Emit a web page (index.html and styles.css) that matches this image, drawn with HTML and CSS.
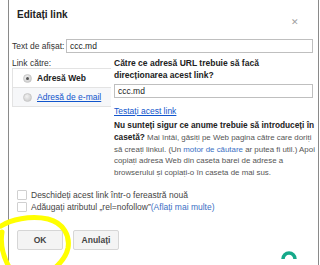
FILE: index.html
```html
<!DOCTYPE html>
<html lang="ro">
<head>
  <meta charset="UTF-8" />
  <title>Editați link</title>
  <link rel="stylesheet" href="styles.css">
</head>
<body>

  <div class="dialog">
    <div class="head">
      <h1>Editați link</h1>
      <span class="close">&#x2715;</span>
    </div>

    <div class="text-row">
      <label>Text de afișat:</label>
      <div class="field">ccc.md</div>
    </div>

    <div class="body">
      <div class="left">
        <div class="cap">Link către:</div>
        <div class="tabs">
          <div class="tab active"><span class="radio on"></span>Adresă Web</div>
          <div class="tab"><span class="radio"></span><a href="#">Adresă de e-mail</a></div>
        </div>
      </div>

      <div class="right">
        <p class="question">Către ce adresă URL trebuie să facă<br>direcționarea acest link?</p>
        <div class="field wide">ccc.md</div>
        <a class="test" href="#">Testați acest link</a>
        <p class="help"><b>Nu sunteți sigur ce anume trebuie să introduceți în<br>casetă?</b> Mai întâi, găsiți pe Web pagina către care doriți<br>să creați linkul. (Un <span class="blue">motor de căutare</span> ar putea fi util.) Apoi<br>copiați adresa Web din caseta barei de adrese a<br>browserului și copiați-o în caseta de mai sus.</p>
      </div>
    </div>

    <div class="checks">
      <div class="check"><span class="box"></span>Deschideți acest link într-o fereastră nouă</div>
      <div class="check"><span class="box"></span>Adăugați atributul „rel=nofollow” <span class="blue">(Aflați mai multe)</span></div>
    </div>

    <div class="buttons">
      <button class="btn">OK</button>
      <button class="btn">Anulați</button>
    </div>
  </div>

  <!-- yellow marker circle drawn over the OK button -->
  <svg class="marker" width="80" height="50" viewBox="0 215 80 50">
    <path d="M1 226 C10 220 30 215 48 219 C64 223 70 236 68 248 C66 258 60 263 56 267" />
    <path d="M2 232 C0 244 3 256 9 267" />
  </svg>

  <svg class="fab" width="18" height="12" viewBox="0 0 18 12">
    <path d="M3 10 A6 6 0 0 1 15 10" />
  </svg>

</body>
</html>
```

FILE: styles.css
```css
body {
  margin: 0;
  background-color: #fff;
  font-family: "Liberation Sans", Arial, sans-serif;
  font-size: 8.5px;
  color: #333;
}

.dialog {
  margin-left: 8px;
  width: 309px;
  height: 265px;
  border-left: 1px solid #8a8a8a;
  border-right: 1px solid #8a8a8a;
}

.head {
  height: 39px;
  display: flex;
  justify-content: space-between;
}

.head h1 {
  margin: 9px 0 0 8px;
  font-size: 10px;
  line-height: 12px;
  font-weight: bold;
  color: #222;
}

.close {
  margin: 17px 19px 0 0;
  font-size: 9px;
  line-height: 10px;
  color: #a0a0a0;
}

.text-row {
  display: flex;
  align-items: center;
  padding-left: 3px;
}

.text-row label {
  width: 54px;
  color: #333;
}

.field {
  height: 12px;
  line-height: 12px;
  width: 242px;
  padding-left: 3px;
  border: 1px solid #bfbfbf;
  color: #222;
}

.body {
  display: flex;
  margin-top: 4px;
  padding-left: 3px;
}

.left {
  width: 102px;
}

.cap {
  line-height: 12px;
}

.tabs {
  width: 98px;
  margin-top: -1px;
  border: 1px solid #e3e3e3;
  border-right: none;
  background-color: #f6f7f9;
}

.tab {
  height: 18px;
  display: flex;
  align-items: center;
  padding-left: 10px;
}

.tab + .tab {
  border-top: 1px solid #e3e3e3;
}

.tab.active {
  background-color: #fff;
  font-weight: bold;
  color: #222;
}

.radio {
  width: 7px;
  height: 7px;
  border-radius: 50%;
  background: radial-gradient(circle at 40% 35%, #f2f2f2, #c4c4c4);
  border: 1px solid #c8c8c8;
  margin-right: 5px;
  position: relative;
}

.radio.on::after {
  content: "";
  position: absolute;
  left: 2px;
  top: 2px;
  width: 3px;
  height: 3px;
  border-radius: 50%;
  background-color: #555;
}

a {
  color: #1155cc;
}

.blue {
  color: #3a6fc4;
}

.right {
  width: 199px;
  white-space: nowrap;
}

.question {
  margin: 0;
  line-height: 12px;
  font-weight: bold;
  color: #222;
}

.field.wide {
  margin-top: 3px;
  width: 194px;
}

.test {
  display: block;
  margin-top: 7px;
  line-height: 12px;
}

.help {
  margin: 3px 0 0;
  line-height: 11.8px;
  font-size: 7.9px;
  color: #555;
}

.help b {
  font-size: 8.3px;
  color: #222;
}

.checks {
  margin-top: 10px;
  padding-left: 8px;
}

.check {
  display: flex;
  align-items: center;
  height: 12px;
  color: #444;
}

.box {
  width: 8px;
  height: 8px;
  border: 1px solid #d0d0d0;
  border-radius: 1px;
  margin-right: 4px;
}

.buttons {
  display: flex;
  gap: 10px;
  margin-top: 17px;
  padding-left: 8px;
}

.btn {
  height: 20px;
  width: 46px;
  padding: 0;
  border: 1px solid #d6d6d6;
  border-radius: 2px;
  background-color: #f4f4f4;
  font-family: "Liberation Sans", Arial, sans-serif;
  font-size: 8.5px;
  font-weight: bold;
  color: #444;
}

.marker {
  position: absolute;
  left: 0;
  top: 215px;
  fill: none;
  stroke: #ffff00;
  stroke-width: 5;
  stroke-linecap: round;
}

.fab {
  position: absolute;
  left: 280px;
  top: 249px;
  fill: none;
  stroke: #16a98a;
  stroke-width: 3.5;
}
```
